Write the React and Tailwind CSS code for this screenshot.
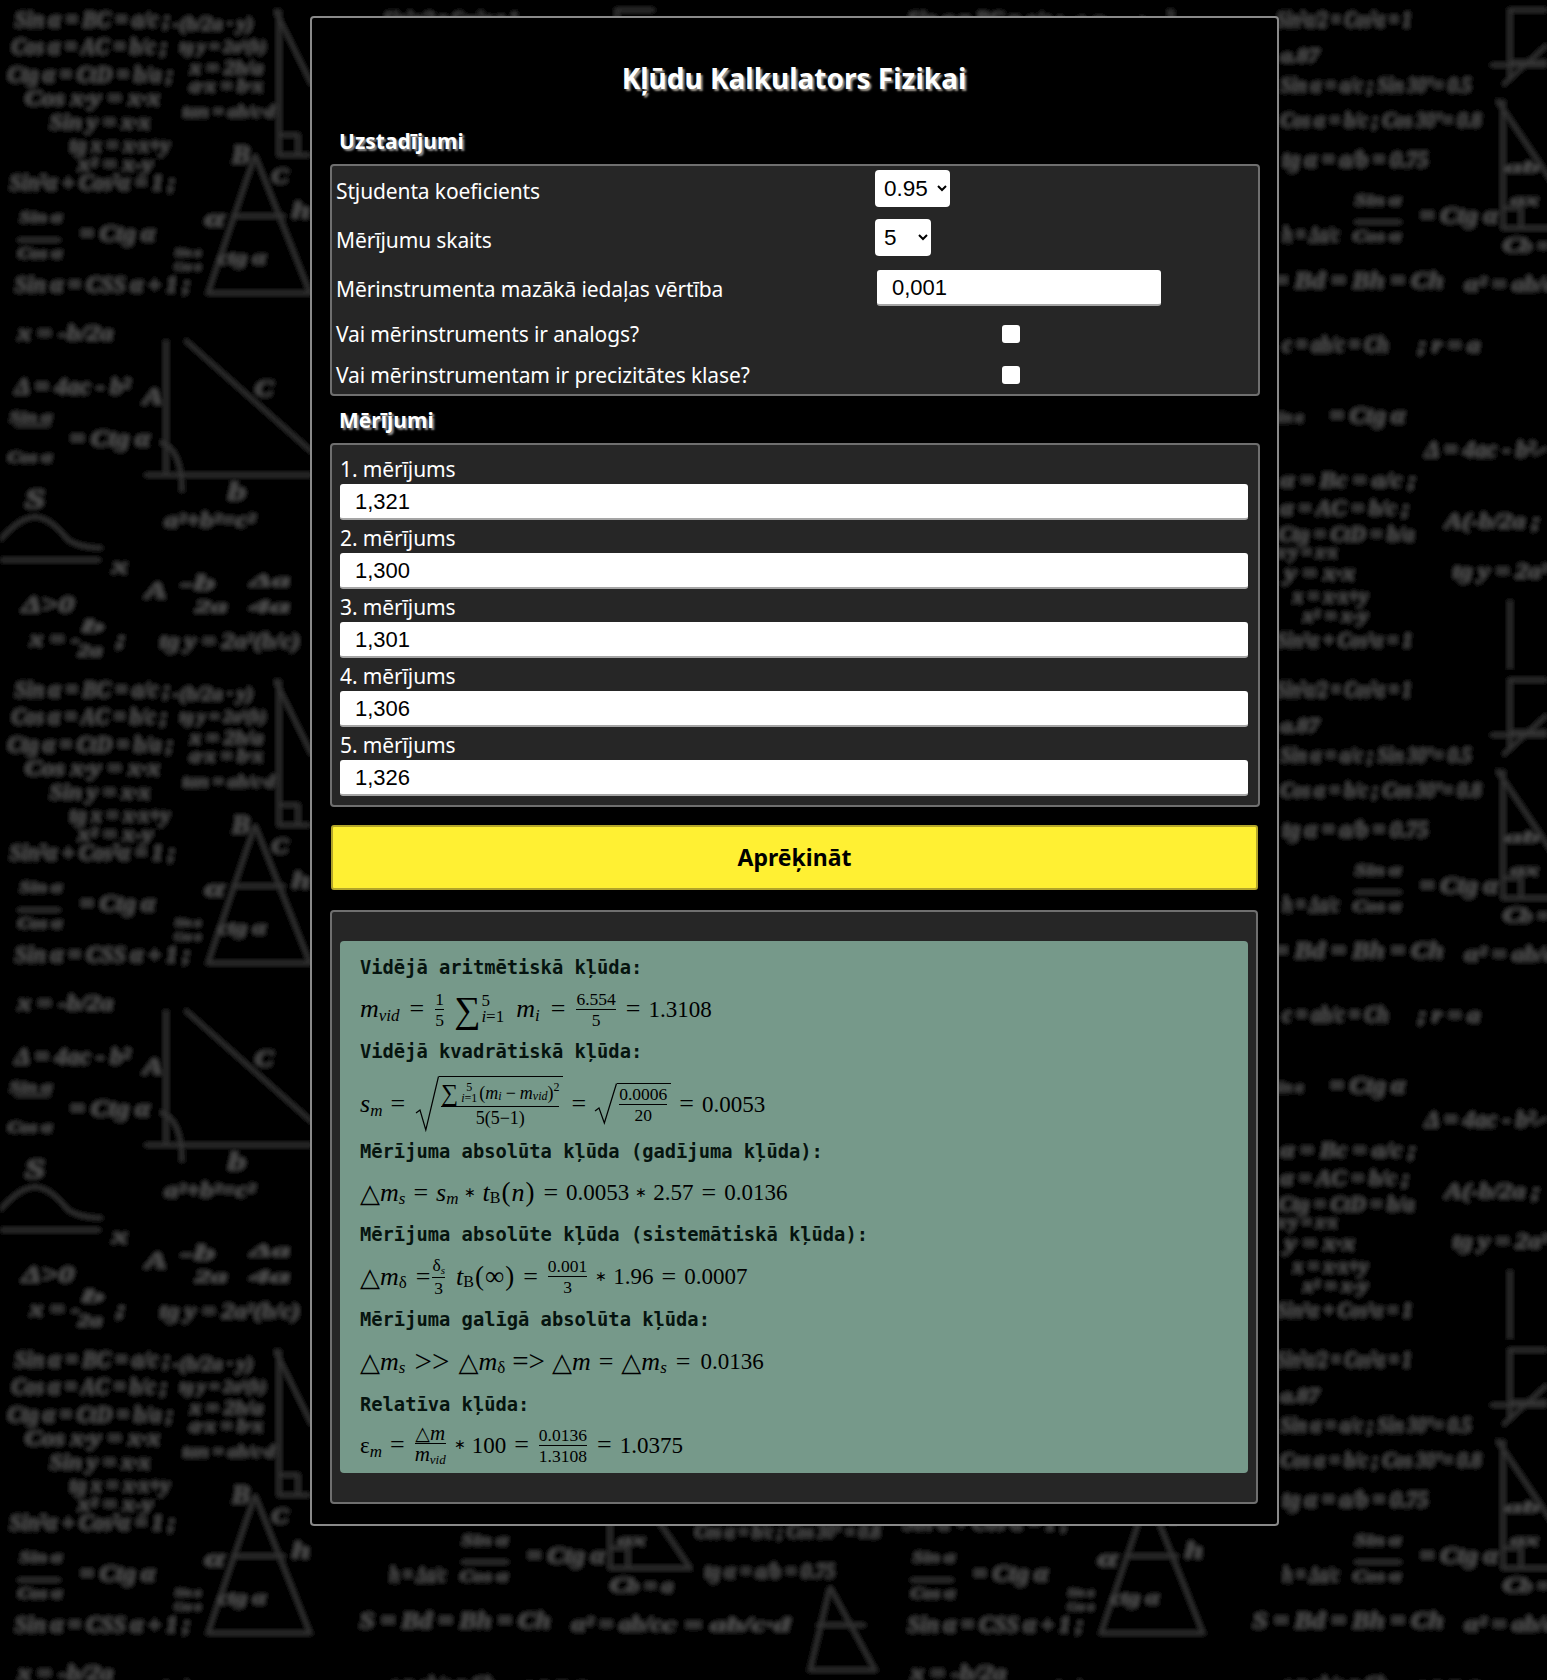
const bgTexts = [
  // x, baseline y, width, font size, text
  [15, 27, 155, 23, "Sin α = BC = a/c ;"],
  [173, 30, 80, 19, "-(b/2a · y)"],
  [12, 54, 155, 23, "Cos α = AC = b/c ;"],
  [180, 52, 86, 16, "tg y = 2a²(b)"],
  [8, 82, 165, 23, "Ctg α = CtD = b/a ;"],
  [190, 74, 73, 18, "x = 2b/a"],
  [190, 92, 73, 18, "a·x = b·x"],
  [25, 105, 135, 21, "Cos x·y = x·x"],
  [50, 129, 100, 21, "Sin y = x·x"],
  [70, 152, 100, 21, "tg x = x·x+y"],
  [78, 171, 75, 20, "x² = x-y"],
  [10, 190, 165, 23, "Sin²α + Cos²α = 1 ;"],
  [183, 117, 92, 17, "tan = ab/c·d"],
  [20, 222, 42, 15, "Sin α"],
  [18, 258, 44, 15, "Cos α"],
  [80, 241, 75, 24, "= Ctg α"],
  [175, 256, 26, 10, "Sin α"],
  [175, 270, 26, 10, "Cos α"],
  [15, 292, 175, 23, "Sin α = CSS α + 1 ;"],
  [218, 264, 48, 18, "ctg α"],
  [18, 340, 95, 22, "x = -b/2a"],
  [15, 394, 115, 23, "Δ = 4ac - b²"],
  [10, 422, 42, 15, "Sin α"],
  [8, 462, 44, 15, "Cos α"],
  [70, 446, 80, 24, "= Ctg α"],
  [165, 527, 90, 20, "a²+b²=c²"],
  [22, 612, 52, 24, "Δ>0"],
  [30, 646, 50, 22, "x = -"],
  [82, 632, 22, 16, "b"],
  [78, 656, 24, 16, "2a"],
  [116, 646, 10, 22, ";"],
  [145, 598, 22, 24, "A"],
  [180, 590, 35, 20, "-b"],
  [195, 612, 32, 16, "2a"],
  [250, 586, 40, 16, "Δa"],
  [250, 612, 40, 16, "4a"],
  [160, 648, 140, 22, "tg y = 2a²(b/c)"],
  [232, 163, 18, 26, "B"],
  [272, 183, 16, 22, "C"],
  [292, 218, 18, 24, "h"],
  [205, 226, 20, 24, "α"],
  [143, 404, 20, 24, "A"],
  [255, 396, 18, 24, "C"],
  [228, 500, 18, 26, "b"],
  [25, 508, 20, 28, "S"],
  [112, 573, 16, 22, "x"],

  [384, 27, 134, 23, "Sin²α/2 = Cos²α = 1"],
  [388, 62, 38, 19, "a.87"],
  [388, 92, 190, 21, "Sin α = a/c ; Sin 30°= 0.5"],
  [388, 127, 200, 21, "Cos α = b/c ; Cos 30°= 0.8"],
  [390, 167, 145, 23, "tg α = a/b = 0.75"],
  [390, 242, 56, 23, "h = Δa/c"],
  [462, 205, 46, 15, "Sin α"],
  [460, 241, 48, 15, "Cos α"],
  [527, 223, 78, 24, "= Ctg α"],
  [360, 288, 190, 24, "S = Bd = Bh = Ch"],
  [572, 291, 90, 21, "α² = ab/c"],
  [662, 291, 128, 18, "c = ab/c·d"],
  [390, 352, 105, 24, "c = ab/c = Ch"],
  [525, 352, 62, 22, "; r = a"],
  [380, 422, 30, 15, "Sin α"],
  [437, 423, 75, 24, "= Ctg α"],
  [532, 457, 110, 23, "Δ = 4ac - b²"],
  [388, 487, 135, 21, "α = Bc = a/c ;"],
  [388, 515, 128, 21, "α = AC = b/c ;"],
  [386, 541, 135, 21, "Ctg = CtD = b/a"],
  [384, 558, 60, 18, "x·y = x·x"],
  [392, 580, 70, 20, "y = x·x"],
  [400, 603, 75, 20, "x = x·x+y"],
  [410, 622, 65, 18, "x² = x-y"],
  [384, 647, 135, 21, "Sin²α + Cos²α = 1"],
  [552, 528, 95, 22, "A(-b/2a ;"],
  [560, 578, 95, 21, "tg y = 2a²"],
  [610, 252, 20, 22, "C"],
  [628, 252, 45, 18, "b = a"],
  [612, 172, 35, 15, "ab"],
  [618, 205, 28, 15, "ax"],
  [695, 198, 185, 19, "Cos α = b/c ; Cos 30° = 0.8"],
  [705, 238, 130, 22, "tg α = a/b = 0.75"],
];

const bgLines = [
  "M255 155 L208 293 L310 293 L255 155",
  "M232 216 L285 216",
  "M279 10 L279 155 L310 155",
  "M279 135 L298 135 L298 155",
  "M275 10 L312 85",
  "M166 340 L166 475",
  "M185 340 L312 452",
  "M145 475 L312 475",
  "M160 442 Q182 448 182 492",
  "M0 560 L100 560",
  "M0 540 Q20 517 35 517 Q50 517 68 540 Q80 548 102 548",
  "M604 100 L690 228 L610 228 L610 100",
  "M610 208 L628 208 L628 228",
  "M617 10 L617 80 M617 62 L654 62 M615 10 L654 10",
  "M598 65 L654 65 M610 85 L654 45",
  "M617 600 L617 670 M617 678 L654 678",
  "M830 247 L810 330 L875 330 L830 247",
  "M817 285 L865 285",
  "M640 455 L654 448",
  "M15 425 L50 425 M18 240 L60 240 M462 222 L508 222",
];

function MathBackground() {
  return (
    <svg className="absolute inset-0 h-full w-full" aria-hidden="true">
      <defs>
        <filter id="chalkBlur" x="-5%" y="-5%" width="110%" height="110%">
          <feGaussianBlur stdDeviation="2" />
        </filter>
        <pattern id="chalkTile" width="893" height="670" patternUnits="userSpaceOnUse">
          <g filter="url(#chalkBlur)">
            <rect width="893" height="670" fill="#000" />
            {bgLines.map((d, i) => (
              <path key={i} d={d} fill="none" stroke="#343434" strokeWidth="3.5" />
            ))}
            {bgTexts.map(([x, y, w, size, text], i) => (
              <text
                key={i}
                x={x}
                y={y}
                textLength={w}
                lengthAdjust="spacingAndGlyphs"
                fontSize={size}
                fontFamily="'Liberation Serif', serif"
                fontStyle="italic"
                fontWeight="700"
                fill="#4c4c4c"
                stroke="#4c4c4c"
                strokeWidth="0.6"
              >
                {text}
              </text>
            ))}
          </g>
        </pattern>
      </defs>
      <rect width="100%" height="100%" fill="url(#chalkTile)" />
    </svg>
  );
}

const sans = "font-['Noto_Sans',sans-serif]";
const arial = "font-['Liberation_Sans',Arial,sans-serif]";
const boxClass = "rounded-[4px] border-2 border-[#6f6f6f] bg-[#262626]";
const inputClass = `h-[36px] rounded-[3px] border-0 border-b-2 border-[#a5a5a5] bg-white pl-[15px] pt-[2px] text-[22px] text-black outline-none ${arial}`;
const labelClass = "text-[21px] tracking-[-0.12px] text-white";

function SettingRow({ label, className, labelPad = "pt-[2px]", children }) {
  return (
    <div className={`flex items-center ${className}`}>
      <label className={`w-[539px] shrink-0 leading-none ${labelPad} ${labelClass}`}>{label}</label>
      {children}
    </div>
  );
}

function Heading({ children }) {
  return (
    <h2 className="flex h-[47px] items-center pl-[9px] pt-[2px] text-[21px] font-bold text-white [text-shadow:2px_2px_2px_#8f8f8f]">
      {children}
    </h2>
  );
}

function Measurement({ n, value }) {
  return (
    <div>
      <div className={`flex h-[33px] items-end pb-[1px] leading-[28px] ${labelClass}`}>{n}. mērījums</div>
      <input type="text" defaultValue={value} className={`${inputClass} block w-[908px]`} />
    </div>
  );
}

const I = ({ children }) => <span className="text-[26px] italic">{children}</span>;
const Op = ({ children, className = "mx-[8px]" }) => <span className={`text-[26px] ${className}`}>{children}</span>;
const Star = () => <span className="mx-[6px] text-[14px]">∗</span>;
const Paren = ({ children }) => <span className="mx-[1px] text-[27px]">{children}</span>;
const Tri = () => <span className="font-['DejaVu_Sans'] text-[26px] leading-none">△</span>;

function Sub({ children, upright }) {
  return (
    <span className={`relative top-[6px] inline-block text-[17px] leading-none ${upright ? "" : "italic"}`}>{children}</span>
  );
}

function Frac({ top, bottom, className = "text-[17.5px] leading-[18px]" }) {
  return (
    <span className={`mx-[1px] inline-flex flex-col items-center px-[1px] ${className}`}>
      <span className="w-full border-b border-black pb-[1px] text-center whitespace-nowrap">{top}</span>
      <span className="pt-[1px] text-center whitespace-nowrap">{bottom}</span>
    </span>
  );
}

function Sqrt({ height, width, children }) {
  const mid = Math.round(height * 0.6);
  return (
    <span className="inline-flex items-stretch">
      <svg width={width} height={height} viewBox={`0 0 ${width} ${height}`} className="shrink-0">
        <path
          d={`M1 ${mid + 3} L5 ${mid} L${width * 0.45} ${height - 2} L${width - 0.5} 0.5`}
          fill="none"
          stroke="#000"
          strokeWidth="1.2"
        />
      </svg>
      <span className="flex items-center border-t border-black pr-[2px]">{children}</span>
    </span>
  );
}

const Dm = ({ s, upright }) => (
  <span className="inline-flex items-center">
    <Tri />
    <I>m</I>
    <Sub upright={upright}>{s}</Sub>
  </span>
);

const tB = (
  <span className="inline-flex items-center">
    <I>t</I>
    <span className="relative top-[5px] text-[16px] leading-none">B</span>
  </span>
);

function Sigma({ sup, small }) {
  return (
    <span className="inline-flex items-center">
      <span className={small ? "text-[24px] leading-none" : "text-[37px] leading-none"}>∑</span>
      <span className={`inline-flex flex-col ${small ? "ml-[3px] mr-[2px] text-[12px] leading-[11px]" : "ml-[1px] text-[17px] leading-[16px]"}`}>
        <span>{sup}</span>
        <span>
          <span className="italic">i</span>=1
        </span>
      </span>
    </span>
  );
}

function MathLine({ className, children }) {
  return (
    <div className={`flex items-center whitespace-nowrap font-['Liberation_Serif',serif] text-[23px] leading-none text-black ${className}`}>
      {children}
    </div>
  );
}

function ResultHeading({ children }) {
  return (
    <h3 className="flex h-[28px] items-center pt-[3px] font-['DejaVu_Sans_Mono',monospace] text-[18.75px] font-bold text-[#06140f]">
      {children}
    </h3>
  );
}

function App() {
  const values = ["1,321", "1,300", "1,301", "1,306", "1,326"];

  return (
    <div className={`relative min-h-screen overflow-hidden bg-black pt-[16px] ${sans}`}>
      <MathBackground />

      <main className="relative ml-[310px] h-[1510px] w-[969px] rounded-[4px] border-2 border-[#8a8a8a] bg-black pl-[18px] pr-[17px]">
        <h1 className="flex h-[99px] items-center justify-center pt-[21px] pr-[2px] text-[28px] font-bold text-white [text-shadow:2px_2px_2px_#a09a90]">
          Kļūdu Kalkulators Fizikai
        </h1>

        <Heading>Uzstadījumi</Heading>
        <section className={`${boxClass} h-[232px] pl-[4px] pt-[4px]`}>
          <SettingRow label="Stjudenta koeficients" labelPad="pt-[6px]" className="h-[37px]">
            <select defaultValue="0.95" className={`h-[37px] w-[75px] rounded-[4px] bg-white pl-[5px] text-[22.5px] text-black ${arial}`}>
              <option>0.95</option>
              <option>0.99</option>
            </select>
          </SettingRow>
          <SettingRow label="Mērījumu skaits" labelPad="pt-[6px]" className="mt-[12px] h-[37px]">
            <select defaultValue="5" className={`h-[37px] w-[56px] rounded-[4px] bg-white pl-[5px] text-[22.5px] text-black ${arial}`}>
              <option>3</option>
              <option>5</option>
            </select>
          </SettingRow>
          <SettingRow label="Mērinstrumenta mazākā iedaļas vērtība" className="mt-[14px] h-[36px]">
            <input type="text" defaultValue="0,001" className={`${inputClass} ml-[2px] w-[284px]`} />
          </SettingRow>
          <SettingRow label="Vai mērinstruments ir analogs?" className="mt-[7px] h-[41px]">
            <div className="flex w-[272px] justify-center">
              <input type="checkbox" className="h-[18px] w-[18px] appearance-none rounded-[3px] bg-white" />
            </div>
          </SettingRow>
          <SettingRow label="Vai mērinstrumentam ir precizitātes klase?" className="h-[41px]">
            <div className="flex w-[272px] justify-center">
              <input type="checkbox" className="h-[18px] w-[18px] appearance-none rounded-[3px] bg-white" />
            </div>
          </SettingRow>
        </section>

        <Heading>Mērījumi</Heading>
        <section className={`${boxClass} h-[364px] pl-[8px] pt-[6px]`}>
          {values.map((value, i) => (
            <Measurement key={i} n={i + 1} value={value} />
          ))}
        </section>

        <button className="mt-[18px] ml-[1px] block h-[65px] w-[927px] rounded-[3px] border-2 border-[#b3a52a] bg-[#fff033] text-[23px] font-bold text-black">
          Aprēķināt
        </button>

        <section className={`${boxClass} mt-[20px] h-[594px] w-[928px] px-[8px] pt-[29px]`}>
          <div className="h-[532px] w-[908px] rounded-[4px] bg-[#76998a] pl-[20px] pt-[12px]">
            <ResultHeading>Vidējā aritmētiskā kļūda:</ResultHeading>
            <MathLine className="h-[56px]">
              <I>m</I>
              <Sub>vid</Sub>
              <Op className="ml-[10px] mr-[9px]">=</Op>
              <Frac top="1" bottom="5" />
              <span className="ml-[8px]">
                <Sigma sup="5" />
              </span>
              <span className="ml-[12px]">
                <I>m</I>
              </span>
              <Sub>i</Sub>
              <Op className="ml-[11px] mr-[9px]">=</Op>
              <Frac top="6.554" bottom="5" />
              <Op>=</Op>
              <span>1.3108</span>
            </MathLine>

            <ResultHeading>Vidējā kvadrātiskā kļūda:</ResultHeading>
            <MathLine className="h-[72px] pt-[6px]">
              <I>s</I>
              <Sub>m</Sub>
              <Op className="ml-[8px] mr-[10px]">=</Op>
              <Sqrt height={56} width={24}>
                <Frac
                  className="text-[18px] leading-[20px]"
                  top={
                    <span className="inline-flex items-center">
                      <Sigma sup="5" small />
                      (<span className="italic">m</span>
                      <span className="relative top-[3px] text-[12px] italic">i</span>
                      <span className="mx-[4px]">−</span>
                      <span className="italic">m</span>
                      <span className="relative top-[3px] text-[12px] italic">vid</span>)
                      <span className="relative top-[-6px] text-[12px]">2</span>
                    </span>
                  }
                  bottom="5(5−1)"
                />
              </Sqrt>
              <Op>=</Op>
              <Sqrt height={42} width={23}>
                <Frac top="0.0006" bottom="20" />
              </Sqrt>
              <Op>=</Op>
              <span>0.0053</span>
            </MathLine>

            <ResultHeading>Mērījuma absolūta kļūda (gadījuma kļūda):</ResultHeading>
            <MathLine className="h-[55px]">
              <Dm s="s" />
              <Op>=</Op>
              <I>s</I>
              <Sub>m</Sub>
              <Star />
              {tB}
              <Paren>(</Paren>
              <I>n</I>
              <Paren>)</Paren>
              <Op>=</Op>
              <span>0.0053</span>
              <Star />
              <span>2.57</span>
              <Op>=</Op>
              <span>0.0136</span>
            </MathLine>

            <ResultHeading>Mērījuma absolūte kļūda (sistemātiskā kļūda):</ResultHeading>
            <MathLine className="h-[57px]">
              <Dm s="δ" upright />
              <span className="ml-[9px] text-[26px]">=</span>
              <Frac
                top={
                  <span>
                    δ<span className="relative top-[3px] text-[11px] italic">s</span>
                  </span>
                }
                bottom="3"
              />
              <span className="ml-[9px]">{tB}</span>
              <Paren>(</Paren>
              <span className="text-[27px]">∞</span>
              <Paren>)</Paren>
              <Op>=</Op>
              <Frac top="0.001" bottom="3" />
              <Star />
              <span>1.96</span>
              <Op>=</Op>
              <span>0.0007</span>
            </MathLine>

            <ResultHeading>Mērījuma galīgā absolūta kļūda:</ResultHeading>
            <MathLine className="h-[57px]">
              <Dm s="s" />
              <Op className="ml-[9px] mr-[9px] text-[31px]">&gt;&gt;</Op>
              <Dm s="δ" upright />
              <span className="mx-[7px] text-[29px]">=&gt;</span>
              <Tri />
              <I>m</I>
              <Op>=</Op>
              <Dm s="s" />
              <Op className="ml-[9px] mr-[10px]">=</Op>
              <span>0.0136</span>
            </MathLine>

            <ResultHeading>Relatīva kļūda:</ResultHeading>
            <MathLine className="h-[54px]">
              <span>ε</span>
              <Sub>m</Sub>
              <Op>=</Op>
              <Frac
                className="text-[21px] leading-[18px]"
                top={
                  <span>
                    <span className="font-['DejaVu_Sans'] text-[19px]">△</span>
                    <span className="italic">m</span>
                  </span>
                }
                bottom={
                  <span>
                    <span className="italic">m</span>
                    <span className="relative top-[3px] text-[13px] italic">vid</span>
                  </span>
                }
              />
              <Star />
              <span>100</span>
              <Op>=</Op>
              <Frac top="0.0136" bottom="1.3108" />
              <Op>=</Op>
              <span>1.0375</span>
            </MathLine>
          </div>
        </section>
      </main>
    </div>
  );
}

export default App;
